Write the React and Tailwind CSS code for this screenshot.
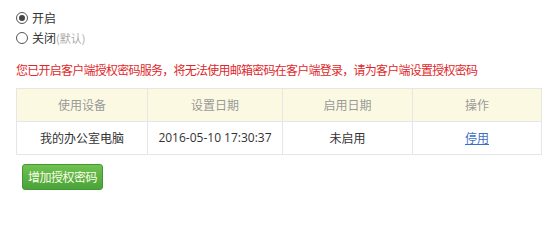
const rows = [
  { device: "我的办公室电脑", set: "2016-05-10 17:30:37", used: "未启用" },
];

const Radio = ({ checked, label, note }) => (
  <label className="flex items-center h-[20px] text-[12px] text-[#333]">
    <span className="w-[12px] h-[12px] rounded-full border border-[#555] bg-white flex items-center justify-center">
      {checked && <span className="w-[6px] h-[6px] rounded-full bg-[#444]" />}
    </span>
    <span className="ml-[4px]">{label}</span>
    {note && <span className="text-[11px] text-[#aaa]">{note}</span>}
  </label>
);

export default function App() {
  return (
    <div
      className="w-[550px] h-[205px] bg-white overflow-hidden relative"
      style={{ fontFamily: '"Noto Sans CJK SC", "Open Sans", sans-serif' }}
    >
      {/* 左侧被截断的标签 */}
      <span className="absolute left-[-7px] top-[7px] text-[12px] text-[#8ab]">：</span>

      <div className="pl-[16px] pr-[8px] pt-[8px]">
        <div className="flex flex-col">
          <Radio checked label="开启" />
          <Radio label="关闭" note="(默认)" />
        </div>

        <p className="mt-[13px] text-[12px] leading-[18px] text-[#e0282a] tracking-[-0.75px]">
          您已开启客户端授权密码服务，将无法使用邮箱密码在客户端登录，请为客户端设置授权密码
        </p>

        <table className="mt-[9px] w-[526px] border-collapse text-[12px] text-center table-fixed">
          <thead>
            <tr className="bg-[#fcf9e3] text-[#999] h-[33px]">
              <th className="font-normal border border-[#e6e6e6] w-[131px]">使用设备</th>
              <th className="font-normal border border-[#e6e6e6] w-[135px]">设置日期</th>
              <th className="font-normal border border-[#e6e6e6] w-[130px]">启用日期</th>
              <th className="font-normal border border-[#e6e6e6]">操作</th>
            </tr>
          </thead>
          <tbody>
            {rows.map((r) => (
              <tr key={r.device} className="h-[33px] text-[#333]">
                <td className="border border-[#e6e6e6]">{r.device}</td>
                <td className="border border-[#e6e6e6]" style={{ fontFamily: '"Open Sans", sans-serif' }}>
                  {r.set}
                </td>
                <td className="border border-[#e6e6e6]">{r.used}</td>
                <td className="border border-[#e6e6e6]">
                  <a href="#" className="text-[#3b6fc4] underline">停用</a>
                </td>
              </tr>
            ))}
          </tbody>
        </table>

        <button className="mt-[9px] ml-[6px] h-[26px] px-[5px] rounded-[3px] border border-[#3f9a33] bg-gradient-to-b from-[#6fc24f] to-[#4aa23a] text-[12px] tracking-[-0.5px] text-[#fbffe8]">
          增加授权密码
        </button>
      </div>
    </div>
  );
}
